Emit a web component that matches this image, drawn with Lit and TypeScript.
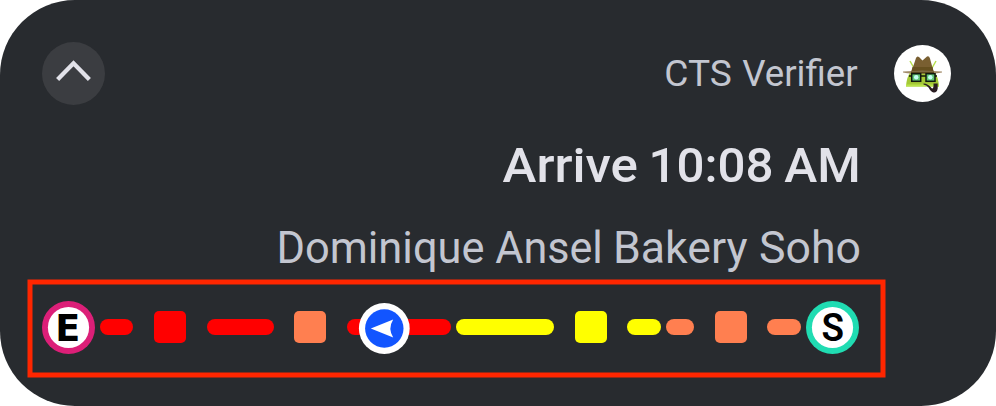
import { LitElement, html, svg, css } from "lit";
import { customElement } from "lit/decorators.js";
import { styleMap } from "lit/directives/style-map.js";

interface Piece {
  kind: "bar" | "stop";
  gap: number;
  width: number;
  color: string;
}

const RED = "#ff0000";
const CORAL = "#ff7f50";
const YELLOW = "#ffff00";

const PIECES: Piece[] = [
  { kind: "bar", gap: 5, width: 33.3, color: RED },
  { kind: "stop", gap: 20.7, width: 32, color: RED },
  { kind: "bar", gap: 21, width: 66.7, color: RED },
  { kind: "stop", gap: 20.8, width: 32, color: CORAL },
  { kind: "bar", gap: 20.7, width: 103.5, color: RED },
  { kind: "bar", gap: 5.2, width: 98.2, color: YELLOW },
  { kind: "stop", gap: 21, width: 32, color: YELLOW },
  { kind: "bar", gap: 20.4, width: 33.6, color: YELLOW },
  { kind: "bar", gap: 5, width: 28.2, color: CORAL },
  { kind: "stop", gap: 20.9, width: 32, color: CORAL },
  { kind: "bar", gap: 20.4, width: 33.4, color: CORAL },
];

@customElement("route-progress")
export class RouteProgress extends LitElement {
  static styles = css`
    :host {
      display: block;
      position: relative;
      box-sizing: border-box;
      width: 859px;
      height: 99px;
      padding: 22px 0 0 15px;
    }
    .frame {
      position: absolute;
      left: 0;
      top: 0;
      width: 859px;
      height: 99px;
    }
    .track {
      position: relative;
      display: flex;
      align-items: center;
      height: 53px;
    }
    .end {
      flex: none;
      width: 53px;
      height: 53px;
    }
    .finish {
      margin-left: 5px;
    }
    .bar,
    .stop {
      flex: none;
      height: 16px;
      border-radius: 8px;
      position: relative;
      top: -0.5px;
    }
    .stop {
      height: 32px;
      border-radius: 5px;
    }
    .tracker {
      position: absolute;
      left: 316px;
      top: 1px;
      width: 52px;
      height: 52px;
    }
    .e {
      font-family: "DejaVu Sans", sans-serif;
      font-size: 37px;
      font-weight: 700;
    }
    .s {
      font-family: Roboto, sans-serif;
      font-size: 38px;
      font-weight: 600;
    }
  `;

  render() {
    return html`
      <svg class="frame" viewBox="0 0 859 99">
        <rect x="3" y="3" width="853" height="93" fill="none" stroke="#ff2600" stroke-width="5" />
      </svg>
      <div class="track">
        <svg class="end" viewBox="0 0 53 53">
          <circle cx="26.5" cy="26.5" r="26.5" fill="#dc1f78" />
          <circle cx="26.5" cy="26.5" r="20.6" fill="#fff" />
          <text class="e" x="13.3" y="40" textLength="25" lengthAdjust="spacingAndGlyphs">E</text>
        </svg>
        ${PIECES.map(
          (p) => html`<div
            class=${p.kind}
            style=${styleMap({
              width: `${p.width}px`,
              marginLeft: `${p.gap}px`,
              background: p.color,
            })}
          ></div>`
        )}
        <svg class="end finish" viewBox="0 0 53 53">
          <circle cx="26.5" cy="26.5" r="26.5" fill="#20dcb2" />
          <circle cx="26.5" cy="26.5" r="20.6" fill="#fff" />
          <text class="s" x="15.5" y="40.2" textLength="22.5" lengthAdjust="spacingAndGlyphs">S</text>
        </svg>
        <svg class="tracker" viewBox="0 0 52 52">
          <circle cx="26.3" cy="26.5" r="25.4" fill="#fff" />
          <circle cx="26.3" cy="26.5" r="19.2" fill="#1255ff" />
          <path d="M12.800 26.500 35.200 17.500q-5.600 9 0 18z" fill="#fff" />
        </svg>
      </div>
    `;
  }
}

/* One word of a right-hand text line: content, left edge, advance width. */
type Word = [string, number, number];

const words = (list: Word[]) =>
  list.map(
    ([text, x, width]) =>
      svg`<tspan x=${x} textLength=${width} lengthAdjust="spacingAndGlyphs">${text}</tspan>`
  );

@customElement("app-root")
export class AppRoot extends LitElement {
  static styles = css`
    :host {
      display: block;
      background: #fff;
    }
    .card {
      box-sizing: border-box;
      width: 996px;
      height: 406px;
      border-radius: 75px;
      background: #282b2f;
      padding-top: 42px;
      overflow: hidden;
      font-family: Roboto, sans-serif;
    }
    .header {
      display: flex;
      align-items: center;
      height: 63px;
      padding: 0 45px 0 42px;
    }
    .collapse {
      width: 63px;
      height: 63px;
    }
    .app {
      width: 200px;
      height: 51px;
      margin-left: auto;
      margin-right: 34px;
    }
    .avatar {
      width: 57px;
      height: 57px;
    }
    .line {
      display: block;
      width: 600px;
      height: 60px;
      margin-left: 260px;
      overflow: visible;
    }
    .title {
      margin-top: 30px;
    }
    .place {
      margin-top: 20px;
    }
    .muted {
      fill: #c3c6d0;
    }
    .strong {
      fill: #e2e2e9;
      font-weight: 500;
      font-size: 48.5px;
    }
    .name {
      font-size: 37px;
    }
    .where {
      font-size: 43.5px;
    }
    route-progress {
      margin: 4px 0 0 27px;
    }
  `;

  render() {
    return html`
      <div class="card">
        <div class="header">
          <svg class="collapse" viewBox="0 0 63 63">
            <circle cx="31.5" cy="31.5" r="31.5" fill="#3b3d41" />
            <path d="M15.6 37.4 31.5 21.2 47.4 37.4" fill="none" stroke="#e2e2e9" stroke-width="4.3" />
          </svg>
          <svg class="app" viewBox="0 0 200 51">
            <text class="name muted" y="38">${words([
              ["CTS", 4.3, 67.5],
              ["Verifier", 82.2, 115.5],
            ])}</text>
          </svg>
          <svg class="avatar" viewBox="0 0 57 57">
            <circle cx="28.5" cy="28.5" r="28.5" fill="#fff" />
            <path d="M16 16 20 23M42 16 38 23" stroke="#b7df4d" stroke-width="1.5" />
            <path d="M12 41.5Q12.500 32 17 26H40Q44.500 32 45 41.500Z" fill="#a4c936" />
            <path d="M12 39.500H45V41.500H12Z" fill="#b9e34b" />
            <path d="M17.500 26.500 22 13Q23 10.500 25 12L28.500 15.500 33 11.500Q35 10.500 36 13.500L39.500 26.500Z" fill="#795f31" />
            <path d="M18.500 22H38.500L39.800 27H17.200Z" fill="#66501f" />
            <path d="M9 26.500Q28.500 25 48 26.500V27.500Q43 28.500 39 28.500H18Q13 28.500 9 27.500Z" fill="#a28b69" />
            <path d="M17 26.500H40V28.500H17Z" fill="#5b471d" />
            <path d="M15 31H43" stroke="#15190d" stroke-width="1.600" />
            <rect x="17.700" y="28.700" width="9" height="7.600" fill="#62c577" stroke="#11180e" stroke-width="1.500" />
            <rect x="32" y="28.700" width="9" height="7.600" fill="#62c577" stroke="#11180e" stroke-width="1.500" />
            <circle cx="22.200" cy="32.200" r="2.200" fill="#c4fff4" />
            <circle cx="36.300" cy="32.200" r="2.200" fill="#c4fff4" />
            <path d="M29.500 38.500Q34 38.500 37.500 43Q39 44.500 39.500 41.500V38.500H43.700V43.500Q43 48 39.500 47.500Q37 47 34.500 42.500Q32.500 40 29.500 39.500Z" fill="#2a1d22" />
          </svg>
        </div>
        <svg class="line title" viewBox="0 0 600 60">
          <text class="strong" y="47">${words([
            ["Arrive", 242.5, 135.5],
            ["10:08", 388.5, 125],
            ["AM", 524.3, 76.5],
          ])}</text>
        </svg>
        <svg class="line place" viewBox="0 0 600 60">
          <text class="where muted" y="48">${words([
            ["Dominique", 16.5, 208],
            ["Ansel", 235.3, 107.5],
            ["Bakery", 353, 134.5],
            ["Soho", 499, 102],
          ])}</text>
        </svg>
        <route-progress></route-progress>
      </div>
    `;
  }
}
